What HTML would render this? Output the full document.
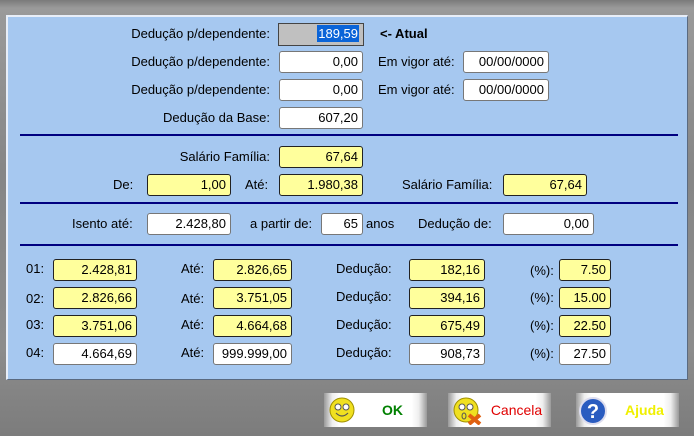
<!DOCTYPE html>
<html><head><meta charset="utf-8"><style>
body{margin:0;width:694px;height:436px;overflow:hidden;background:linear-gradient(#7a7a7a,#9a9a9a 8px,#868686 40%,#8c8c8c 80%,#7c7c7c);font-family:"Liberation Sans",sans-serif;font-size:13px;position:relative}
.panel{position:absolute;left:6px;top:15px;width:679px;height:362px;background:#a6c8f0;border-top:2px solid #e8eef8;border-left:2px solid #e8eef8;border-right:1px solid #5a6a80;border-bottom:1px solid #5a6a80}
.l{position:absolute;color:#000;white-space:nowrap;line-height:22px;height:22px}
.r{text-align:right}
.b{position:absolute;height:20px;background:#fff;border:1px solid #777;border-radius:3px;line-height:20px;text-align:right;padding-right:4px;box-sizing:border-box;height:22px}
.y{background:#ffff9c;border-color:#222}
.hr{position:absolute;left:20px;width:658px;height:2px;background:#000080}
.btn{position:absolute;top:393px;width:103px;height:34px;background:linear-gradient(90deg,#999,#eee 8%,#fff 15%,#fff 85%,#eee 92%,#999);font-size:14px;line-height:34px}
.btn span{position:absolute;left:40px;right:6px;text-align:center}
</style></head><body>
<div class="panel"></div>
<div class="l r" style="left:80px;width:190px;top:23px">Dedução p/dependente:</div>
<div class="b" style="left:278px;top:23px;width:86px;height:23px;background:#c0c0c0;border:1px solid #444;border-radius:0"><span style="background:#0a64d8;color:#fff;padding:1px 1px">189,59</span></div>
<div class="l" style="left:380px;top:23px;font-weight:bold">&lt;- Atual</div>
<div class="l r" style="left:80px;width:190px;top:51px">Dedução p/dependente:</div>
<div class="b" style="left:279px;top:51px;width:84px">0,00</div>
<div class="l" style="left:378px;top:51px">Em vigor até:</div>
<div class="b" style="left:463px;top:51px;width:86px">00/00/0000</div>
<div class="l r" style="left:80px;width:190px;top:79px">Dedução p/dependente:</div>
<div class="b" style="left:279px;top:79px;width:84px">0,00</div>
<div class="l" style="left:378px;top:79px">Em vigor até:</div>
<div class="b" style="left:463px;top:79px;width:86px">00/00/0000</div>
<div class="l r" style="left:80px;width:190px;top:107px">Dedução da Base:</div>
<div class="b" style="left:279px;top:107px;width:84px">607,20</div>
<div class="hr" style="top:134px"></div>
<div class="l r" style="left:80px;width:190px;top:146px">Salário Família:</div>
<div class="b y" style="left:279px;top:146px;width:84px">67,64</div>
<div class="l" style="left:113px;top:174px">De:</div>
<div class="b y" style="left:147px;top:174px;width:84px">1,00</div>
<div class="l" style="left:245px;top:174px">Até:</div>
<div class="b y" style="left:279px;top:174px;width:84px">1.980,38</div>
<div class="l" style="left:402px;top:174px">Salário Família:</div>
<div class="b y" style="left:503px;top:174px;width:84px">67,64</div>
<div class="hr" style="top:202px"></div>
<div class="l" style="left:72px;top:213px">Isento até:</div>
<div class="b" style="left:147px;top:213px;width:84px">2.428,80</div>
<div class="l" style="left:250px;top:213px">a partir de:</div>
<div class="b" style="left:321px;top:213px;width:42px">65</div>
<div class="l" style="left:366px;top:213px">anos</div>
<div class="l" style="left:418px;top:213px">Dedução de:</div>
<div class="b" style="left:503px;top:213px;width:91px">0,00</div>
<div class="hr" style="top:244px"></div>

<div class="l" style="left:26px;top:258px">01:</div><div class="b y" style="left:53px;top:259px;width:84px">2.428,81</div>
<div class="l" style="left:181px;top:258px">Até:</div><div class="b y" style="left:213px;top:259px;width:79px">2.826,65</div>
<div class="l" style="left:336px;top:258px">Dedução:</div><div class="b y" style="left:409px;top:259px;width:76px">182,16</div>
<div class="l" style="left:530px;top:260px">(%):</div><div class="b y" style="left:559px;top:259px;width:52px">7.50</div>

<div class="l" style="left:26px;top:288px">02:</div><div class="b y" style="left:53px;top:287px;width:84px">2.826,66</div>
<div class="l" style="left:181px;top:288px">Até:</div><div class="b y" style="left:213px;top:287px;width:79px">3.751,05</div>
<div class="l" style="left:336px;top:286px">Dedução:</div><div class="b y" style="left:409px;top:287px;width:76px">394,16</div>
<div class="l" style="left:530px;top:287px">(%):</div><div class="b y" style="left:559px;top:287px;width:52px">15.00</div>

<div class="l" style="left:26px;top:314px">03:</div><div class="b y" style="left:53px;top:315px;width:84px">3.751,06</div>
<div class="l" style="left:181px;top:314px">Até:</div><div class="b y" style="left:213px;top:315px;width:79px">4.664,68</div>
<div class="l" style="left:336px;top:314px">Dedução:</div><div class="b y" style="left:409px;top:315px;width:76px">675,49</div>
<div class="l" style="left:530px;top:315px">(%):</div><div class="b y" style="left:559px;top:315px;width:52px">22.50</div>

<div class="l" style="left:26px;top:342px">04:</div><div class="b" style="left:53px;top:343px;width:84px">4.664,69</div>
<div class="l" style="left:181px;top:342px">Até:</div><div class="b" style="left:213px;top:343px;width:79px">999.999,00</div>
<div class="l" style="left:336px;top:342px">Dedução:</div><div class="b" style="left:409px;top:343px;width:76px">908,73</div>
<div class="l" style="left:530px;top:343px">(%):</div><div class="b" style="left:559px;top:343px;width:52px">27.50</div>

<div class="btn" style="left:324px">
<svg style="position:absolute;left:5px;top:4px" width="26" height="26"><circle cx="13" cy="13" r="12" fill="#f0e020" stroke="#a09000"/><circle cx="9" cy="10" r="3" fill="#fff" stroke="#555"/><circle cx="17" cy="10" r="3" fill="#fff" stroke="#555"/><path d="M7 16 Q13 22 19 16" fill="none" stroke="#555" stroke-width="1.2"/></svg>
<span style="color:#008000;font-weight:bold">OK</span></div>
<div class="btn" style="left:448px">
<svg style="position:absolute;left:5px;top:4px" width="30" height="28"><circle cx="13" cy="13" r="12" fill="#f0e020" stroke="#a09000"/><circle cx="9" cy="10" r="3" fill="#fff" stroke="#555"/><circle cx="17" cy="10" r="3" fill="#fff" stroke="#555"/><ellipse cx="11" cy="19" rx="2" ry="3" fill="none" stroke="#555"/><path d="M16 18 L27 27 M27 18 L16 27" stroke="#e06010" stroke-width="4"/></svg>
<span style="color:#e00000">Cancela</span></div>
<div class="btn" style="left:576px">
<svg style="position:absolute;left:2px;top:3px" width="30" height="30"><circle cx="15" cy="15" r="13" fill="#2a5cc0" stroke="#dde" stroke-width="2"/><text x="15" y="22" text-anchor="middle" fill="#fff" font-size="20" font-weight="bold" font-family="Liberation Sans">?</text></svg>
<span style="color:#f0f000;font-weight:bold">Ajuda</span></div>
</body></html>
